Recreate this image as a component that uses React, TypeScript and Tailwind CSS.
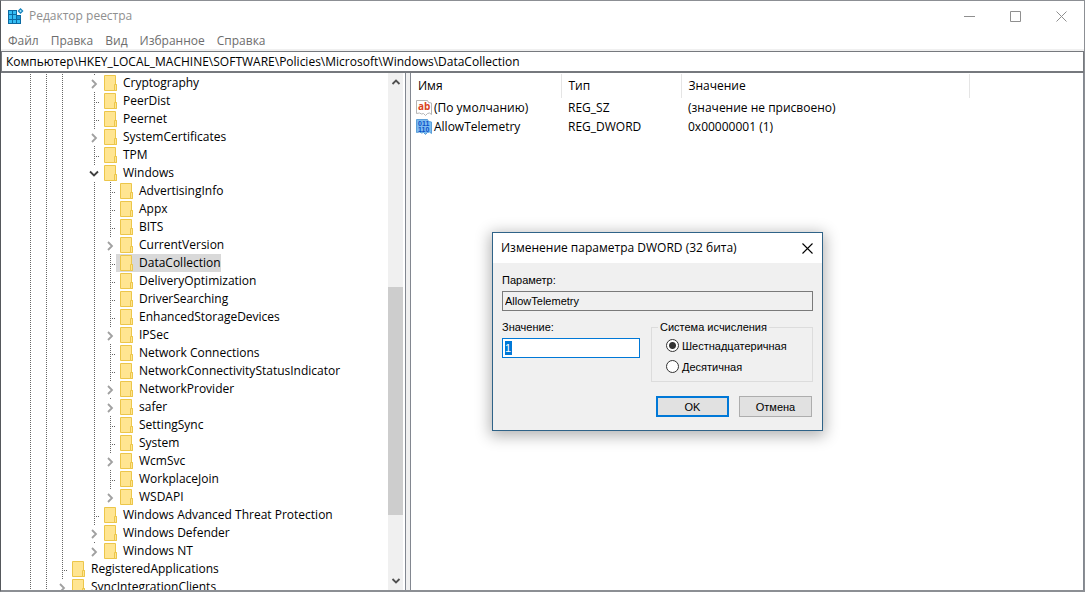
import { useState } from 'react';
import type { ReactNode } from 'react';

interface TreeNode {
    name: string;
    // 1 = guide line, 0 = empty column
    guides: number[];
    kind: 'leaf' | 'closed' | 'open';
}

const ROOT = [1, 1];
const POLICY = [1, 1, 1, 0];
const CHILD = [1, 1, 1, 0, 1];

const NODES: TreeNode[] = [
    { name: 'Cryptography', guides: POLICY, kind: 'closed' },
    { name: 'PeerDist', guides: POLICY, kind: 'leaf' },
    { name: 'Peernet', guides: POLICY, kind: 'leaf' },
    { name: 'SystemCertificates', guides: POLICY, kind: 'closed' },
    { name: 'TPM', guides: POLICY, kind: 'leaf' },
    { name: 'Windows', guides: POLICY, kind: 'open' },
    { name: 'AdvertisingInfo', guides: CHILD, kind: 'leaf' },
    { name: 'Appx', guides: CHILD, kind: 'leaf' },
    { name: 'BITS', guides: CHILD, kind: 'leaf' },
    { name: 'CurrentVersion', guides: CHILD, kind: 'closed' },
    { name: 'DataCollection', guides: CHILD, kind: 'leaf' },
    { name: 'DeliveryOptimization', guides: CHILD, kind: 'leaf' },
    { name: 'DriverSearching', guides: CHILD, kind: 'leaf' },
    { name: 'EnhancedStorageDevices', guides: CHILD, kind: 'leaf' },
    { name: 'IPSec', guides: CHILD, kind: 'closed' },
    { name: 'Network Connections', guides: CHILD, kind: 'leaf' },
    { name: 'NetworkConnectivityStatusIndicator', guides: CHILD, kind: 'leaf' },
    { name: 'NetworkProvider', guides: CHILD, kind: 'closed' },
    { name: 'safer', guides: CHILD, kind: 'closed' },
    { name: 'SettingSync', guides: CHILD, kind: 'leaf' },
    { name: 'System', guides: CHILD, kind: 'leaf' },
    { name: 'WcmSvc', guides: CHILD, kind: 'closed' },
    { name: 'WorkplaceJoin', guides: CHILD, kind: 'leaf' },
    { name: 'WSDAPI', guides: CHILD, kind: 'closed' },
    { name: 'Windows Advanced Threat Protection', guides: POLICY, kind: 'leaf' },
    { name: 'Windows Defender', guides: POLICY, kind: 'closed' },
    { name: 'Windows NT', guides: POLICY, kind: 'closed' },
    { name: 'RegisteredApplications', guides: ROOT, kind: 'leaf' },
    { name: 'SyncIntegrationClients', guides: ROOT, kind: 'closed' },
];

const MENU = ['Файл', 'Правка', 'Вид', 'Избранное', 'Справка'];

function RegeditIcon() {
    return (
        <svg width="16" height="16" viewBox="0 0 16 16" aria-hidden="true">
            <path d="M0 2h9v5h4v9H0z" fill="#0b6aa2" />
            <path d="M1 3h3v3H1zM5 3h3v3H5zM1 7h3v4H1zM5 7h3v4H5zM1 12h3v3H1zM5 12h3v3H5zM9 12h3v3H9z" fill="#35bdf3" />
            <path d="M9 8h3v3H9z" fill="#1b93d1" />
            <path d="M12.5 0l3 3-3 3-3-3z" fill="#1583bd" />
            <path d="M12.5 1.7l1.3 1.3-1.3 1.3-1.3-1.3z" fill="#a9e4fb" />
        </svg>
    );
}

function FolderIcon() {
    return (
        <svg width="13" height="16" viewBox="0 0 13 16" className="shrink-0" aria-hidden="true">
            <path d="M.5.5h11v9h1v6H.5z" fill="#ffe591" stroke="#ecc64a" />
            <path d="M10.5 9.5h2v6h-2z" fill="#ffe591" stroke="#ecc64a" />
        </svg>
    );
}

const TORN_PAGE = 'M.5.5h11l1 2 3 .5v11.500l-2-1.500-2 .5-2 2-2-2-2 .5-2-1-3 .5z';

function StringIcon() {
    return (
        <svg width="16" height="16" viewBox="0 0 16 16" className="shrink-0" aria-hidden="true">
            <path d={TORN_PAGE} fill="#fff" stroke="#b5b5b5" />
            <text x="2" y="10" className="fill-[#d9431e] font-['Open_Sans',sans-serif] text-[10px] font-bold">ab</text>
        </svg>
    );
}

function BinaryIcon() {
    return (
        <svg width="16" height="16" viewBox="0 0 16 16" className="shrink-0" aria-hidden="true">
            <path d={TORN_PAGE} fill="#7dbcf0" stroke="#5b9fd8" />
            <g className="fill-[#0a50c8] font-['Liberation_Sans',sans-serif] text-[7px] font-bold">
                <text x="2" y="7">011</text>
                <text x="2" y="13">110</text>
            </g>
        </svg>
    );
}

function Chevron({ className, d }: { className: string; d: string }) {
    return (
        <svg width="10" height="10" viewBox="0 0 10 10" className={className} aria-hidden="true">
            <path d={d} fill="none" stroke="currentColor" strokeWidth="1.8" />
        </svg>
    );
}

function Guide({ short = false }: { short?: boolean }) {
    return (
        <span
            className={`w-px bg-[repeating-linear-gradient(to_bottom,#666_0_1px,transparent_1px_2px)] ${short ? 'h-0.5' : 'h-full'}`}
        />
    );
}

function TreeRow({ node, selected, onSelect }: { node: TreeNode; selected: boolean; onSelect: () => void }) {
    return (
        <li className="flex h-[18px] shrink-0">
            {node.guides.map((on, i) => (
                <span key={i} className="flex w-4 shrink-0 pl-2">
                    {on === 1 && <Guide />}
                </span>
            ))}
            <span className="relative flex w-3.5 shrink-0 pl-2">
                <Guide short={node.kind !== 'leaf'} />
                {node.kind === 'leaf' && (
                    <span className="mt-2.5 h-px flex-1 bg-[repeating-linear-gradient(to_right,transparent_0_1px,#666_1px_2px)]" />
                )}
                {node.kind === 'closed' && (
                    <Chevron className="absolute left-1 top-[5px] text-[#a0a0a0]" d="M2 1l4 4-4 4" />
                )}
                {node.kind === 'open' && (
                    <Chevron className="absolute left-[3px] top-[5px] text-[#404040]" d="M1 2.500l4 4 4-4" />
                )}
            </span>
            <button
                type="button"
                onClick={onSelect}
                className={`flex items-center gap-1.5 whitespace-nowrap pl-1 ${selected ? 'bg-[#d9d9d9]' : ''}`}
            >
                <FolderIcon />
                {node.name}
            </button>
        </li>
    );
}

function WindowButton({ label, children }: { label: string; children: ReactNode }) {
    return (
        <button type="button" aria-label={label} className="flex w-[46px] items-center justify-center text-[#8f8f8f]">
            <svg width="11" height="11" viewBox="0 0 11 11" fill="none" stroke="currentColor" aria-hidden="true">
                {children}
            </svg>
        </button>
    );
}

function EditDialog() {
    const [value, setValue] = useState('1');
    const [base, setBase] = useState('hex');

    return (
        <div
            role="dialog"
            aria-labelledby="dialog-title"
            className="absolute left-[491px] top-[231px] w-[331px] border border-[#2f6388] bg-[#f0f0f0] font-['Liberation_Sans',Arial,sans-serif] text-[11px] leading-[14px] text-black shadow-[0_3px_14px_2px_rgba(0,0,0,0.3)]"
        >
            <div className="flex h-[30px] items-center justify-between bg-white pl-2 font-['Open_Sans','Noto_Sans',sans-serif] text-xs">
                <h2 id="dialog-title">Изменение параметра DWORD (32 бита)</h2>
                <button type="button" aria-label="Закрыть" className="flex h-full w-[30px] items-center justify-center">
                    <svg width="11" height="11" viewBox="0 0 11 11" aria-hidden="true">
                        <path d="M.5.5l10 10M10.500.5l-10 10" stroke="#000" strokeWidth="1.100" />
                    </svg>
                </button>
            </div>
            <form className="px-[9px] pb-[13px] pt-2.5" onSubmit={(e) => e.preventDefault()}>
                <label htmlFor="param" className="block">Параметр:</label>
                <input
                    id="param"
                    readOnly
                    value="AllowTelemetry"
                    className="mt-1 block h-5 w-full border border-[#7a7a7a] bg-[#f0f0f0] px-0.5 outline-none"
                />
                <div className="mt-[9px] flex gap-[11px]">
                    <div className="flex-1">
                        <label htmlFor="value" className="block">Значение:</label>
                        <div className="mt-1 flex h-5 items-center border border-[#0078d7] bg-white px-0.5">
                            <input
                                id="value"
                                value={value}
                                onChange={(e) => setValue(e.target.value)}
                                className="w-[7px] bg-[#0078d7] text-white outline-none"
                            />
                        </div>
                    </div>
                    <fieldset className="w-[162px] border border-[#dcdcdc] pb-1 pl-3.5 pt-px">
                        <legend className="-ml-2 px-0.5">Система исчисления</legend>
                        <label className="flex h-[21px] items-center gap-[3px]">
                            <input
                                type="radio"
                                name="base"
                                checked={base === 'hex'}
                                onChange={() => setBase('hex')}
                                className="size-[13px] appearance-none rounded-full border border-[#333] bg-white checked:bg-[radial-gradient(circle,#333_0_3px,#fff_4px)]"
                            />
                            Шестнадцатеричная
                        </label>
                        <label className="flex h-[21px] items-center gap-[3px]">
                            <input
                                type="radio"
                                name="base"
                                checked={base === 'dec'}
                                onChange={() => setBase('dec')}
                                className="size-[13px] appearance-none rounded-full border border-[#333] bg-white checked:bg-[radial-gradient(circle,#333_0_3px,#fff_4px)]"
                            />
                            Десятичная
                        </label>
                    </fieldset>
                </div>
                <div className="mt-3.5 flex justify-end gap-2.5 pr-px">
                    <button type="submit" className="h-[21px] w-[73px] border-2 border-[#0078d7] bg-[#e1e1e1]">OK</button>
                    <button type="button" className="h-[21px] w-[73px] border border-[#adadad] bg-[#e1e1e1]">Отмена</button>
                </div>
            </form>
        </div>
    );
}

export default function App() {
    const [selected, setSelected] = useState('DataCollection');

    return (
        <div className="relative flex h-screen flex-col overflow-hidden border border-b-2 border-[#8c8f94] border-l-[#55585c] bg-white font-['Open_Sans','Noto_Sans',sans-serif] text-xs text-black">
            <header className="flex h-[30px] shrink-0 justify-between">
                <div className="flex items-center gap-[5px] pl-[7px] text-[#8f8f8f]">
                    <RegeditIcon />
                    <h1>Редактор реестра</h1>
                </div>
                <div className="flex">
                    <WindowButton label="Свернуть"><path d="M0 5.500h11" /></WindowButton>
                    <WindowButton label="Развернуть"><path d="M.5.5h10v10H.5z" /></WindowButton>
                    <WindowButton label="Закрыть"><path d="M.5.5l10 10M10.500.5l-10 10" /></WindowButton>
                </div>
            </header>
            <nav className="flex h-5 shrink-0 items-center gap-3 border-b-2 border-[#f0f0f0] pl-[7px] pt-0.5 text-[#6d6d6d]">
                {MENU.map((item) => (
                    <button key={item} type="button">{item}</button>
                ))}
            </nav>
            <input
                aria-label="Адрес"
                defaultValue="Компьютер\HKEY_LOCAL_MACHINE\SOFTWARE\Policies\Microsoft\Windows\DataCollection"
                className="h-[22px] w-full shrink-0 border border-b-2 border-[#76797e] px-1 outline-none"
            />
            <main className="flex min-h-0 flex-1 border-r border-[#828790]">
                <div className="flex w-[405px] shrink-0 border-r border-[#828790]">
                    <ul className="min-w-0 flex-1 overflow-hidden pl-[21px] pt-px">
                        {NODES.map((node) => (
                            <TreeRow
                                key={node.name}
                                node={node}
                                selected={node.name === selected}
                                onSelect={() => setSelected(node.name)}
                            />
                        ))}
                    </ul>
                    <div className="mr-0.5 flex w-[15px] flex-col items-center bg-[#f0f0f0] text-[#505050]">
                        <Chevron className="my-1" d="M1.500 7l3.500-3.500 3.500 3.500" />
                        <div className="flex min-h-0 w-full flex-1 flex-col">
                            <div className="grow-[196]" />
                            <div className="grow-[228] bg-[#cdcdcd]" />
                            <div className="grow-[57]" />
                        </div>
                        <Chevron className="my-1" d="M1.500 3l3.500 3.500 3.500-3.500" />
                    </div>
                </div>
                <div className="w-1 shrink-0 bg-[#f0f0f0]" />
                <div className="min-w-0 flex-1 border-l border-[#828790] pt-px">
                    <table className="w-full table-fixed border-collapse text-left">
                        <thead>
                            <tr className="h-6">
                                <th className="w-[150px] border-r border-[#e5e5e5] pl-[7px] font-normal">Имя</th>
                                <th className="w-[120px] border-r border-[#e5e5e5] pl-[7px] font-normal">Тип</th>
                                <th className="w-[288px] border-r border-[#e5e5e5] pl-[7px] font-normal">Значение</th>
                                <th aria-hidden="true" />
                            </tr>
                        </thead>
                        <tbody>
                            <tr className="h-[19px]">
                                <td className="p-0 pl-[5px]">
                                    <span className="flex items-center gap-0.5"><StringIcon />(По умолчанию)</span>
                                </td>
                                <td className="p-0 pl-[7px]">REG_SZ</td>
                                <td className="p-0 pl-[7px]">(значение не присвоено)</td>
                            </tr>
                            <tr className="h-[19px]">
                                <td className="p-0 pl-[5px]">
                                    <span className="flex items-center gap-0.5"><BinaryIcon />AllowTelemetry</span>
                                </td>
                                <td className="p-0 pl-[7px]">REG_DWORD</td>
                                <td className="p-0 pl-[7px]">0x00000001 (1)</td>
                            </tr>
                        </tbody>
                    </table>
                </div>
            </main>
            <EditDialog />
        </div>
    );
}
